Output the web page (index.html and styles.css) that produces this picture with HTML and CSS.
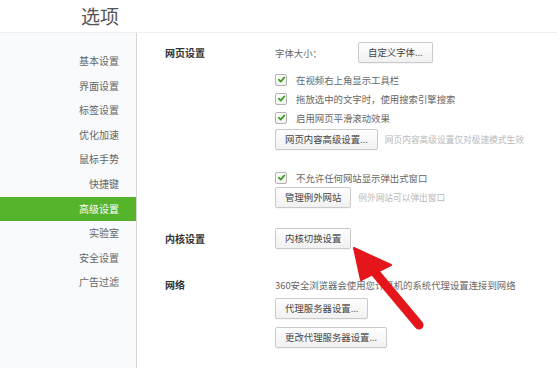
FILE: index.html
```html
<!DOCTYPE html>
<html lang="zh-CN">
<head>
<meta charset="utf-8">
<title>选项</title>
<link rel="stylesheet" href="styles.css">
</head>
<body>
<header class="header"><span class="title">选项</span></header>
<div class="layout">
  <nav class="sidebar">
    <div class="nav-item">基本设置</div>
    <div class="nav-item">界面设置</div>
    <div class="nav-item">标签设置</div>
    <div class="nav-item">优化加速</div>
    <div class="nav-item">鼠标手势</div>
    <div class="nav-item">快捷键</div>
    <div class="nav-item active">高级设置</div>
    <div class="nav-item">实验室</div>
    <div class="nav-item">安全设置</div>
    <div class="nav-item">广告过滤</div>
  </nav>
  <main class="content">
    <section class="section">
      <div class="label">网页设置</div>
      <div class="fields">
        <div class="row">
          <span class="field-name">字体大小：</span>
          <button class="btn">自定义字体...</button>
        </div>
        <div class="checks">
          <label class="check"><span class="box"><svg viewBox="0 0 10 10"><path d="M2 5.2 L4.2 7.4 L8.2 2.6" /></svg></span>在视频右上角显示工具栏</label>
          <label class="check"><span class="box"><svg viewBox="0 0 10 10"><path d="M2 5.2 L4.2 7.4 L8.2 2.6" /></svg></span>拖放选中的文字时，使用搜索引擎搜索</label>
          <label class="check"><span class="box"><svg viewBox="0 0 10 10"><path d="M2 5.2 L4.2 7.4 L8.2 2.6" /></svg></span>启用网页平滑滚动效果</label>
        </div>
        <div class="row gap-sm">
          <button class="btn">网页内容高级设置...</button>
          <span class="hint">网页内容高级设置仅对极速模式生效</span>
        </div>
        <label class="check gap-lg"><span class="box"><svg viewBox="0 0 10 10"><path d="M2 5.2 L4.2 7.4 L8.2 2.6" /></svg></span>不允许任何网站显示弹出式窗口</label>
        <div class="row">
          <button class="btn">管理例外网站</button>
          <span class="hint">例外网站可以弹出窗口</span>
        </div>
      </div>
    </section>
    <section class="section sec-kernel">
      <div class="label">内核设置</div>
      <div class="fields">
        <div class="row"><button class="btn">内核切换设置</button></div>
      </div>
    </section>
    <section class="section sec-net">
      <div class="label">网络</div>
      <div class="fields">
        <div class="row"><span class="text">360安全浏览器会使用您计算机的系统代理设置连接到网络</span></div>
        <div class="row gap-xs"><button class="btn">代理服务器设置...</button></div>
        <div class="row gap-md"><button class="btn">更改代理服务器设置...</button></div>
      </div>
    </section>
  </main>
</div>
<svg class="arrow" width="557" height="368" viewBox="0 0 557 368">
  <line x1="373" y1="270" x2="419" y2="325" stroke="#e4161b" stroke-width="9" stroke-linecap="round"/>
  <polygon points="354,248 391,265 361,280" fill="#e4161b" stroke="#e4161b" stroke-width="2" stroke-linejoin="round"/>
</svg>
</body>
</html>
```

FILE: styles.css
```css
* { box-sizing: border-box; }
html, body { margin: 0; padding: 0; }
body {
  width: 557px;
  height: 368px;
  overflow: hidden;
  background: #fff;
  font-family: "Noto Sans CJK SC", "Noto Sans", sans-serif;
  color: #555;
  position: relative;
}
.header {
  height: 33px;
  border-bottom: 1px solid #efefef;
  display: flex;
  align-items: center;
  padding-left: 81px;
}
.title {
  font-size: 19px;
  color: #555;
  line-height: 1;
  margin-top: -1px;
}
.layout {
  display: flex;
  height: 335px;
}
.sidebar {
  width: 137px;
  flex: none;
  background: #f8fafb;
  border-right: 1px solid #d6d6d6;
  padding-top: 16px;
}
.nav-item {
  height: 24.6px;
  line-height: 24.6px;
  text-align: right;
  padding-right: 17px;
  font-size: 10px;
  color: #666;
}
.nav-item.active {
  background: #55b42c;
  color: #fff;
}
.content {
  flex: 1;
  padding-top: 9px;
  padding-left: 28px;
}
.section {
  display: grid;
  grid-template-columns: 110px 1fr;
  align-items: start;
}
.sec-kernel { margin-top: 20px; }
.sec-net { margin-top: 25px; }
.label {
  font-size: 10px;
  font-weight: bold;
  color: #333;
  line-height: 21px;
}
.fields {
  display: flex;
  flex-direction: column;
  font-size: 9.4px;
}
.row {
  display: flex;
  align-items: center;
  height: 21px;
}
.gap-xs { margin-top: 3px; }
.gap-sm { margin-top: 2px; }
.gap-md { margin-top: 8px; }
.gap-lg { margin-top: 18px; }
.field-name {
  width: 83px;
  color: #666;
}
.text { color: #666; }
.btn {
  height: 21px;
  padding: 0 9px;
  border: 1px solid #cacaca;
  border-radius: 2px;
  background: linear-gradient(#fefefe, #f1f1f1);
  font-family: inherit;
  font-size: 9.4px;
  color: #444;
  line-height: 19px;
  box-shadow: 0 1px 0 rgba(0,0,0,0.04);
}
.hint {
  margin-left: 7px;
  font-size: 8.7px;
  color: #b9b9b9;
}
.checks {
  display: flex;
  flex-direction: column;
  margin-top: 7px;
}
.check {
  display: flex;
  align-items: center;
  height: 19px;
  color: #666;
}
.box {
  width: 12px;
  height: 12px;
  border: 1px solid #b3b3b3;
  border-radius: 2px;
  background: linear-gradient(#fff, #f2f2f2);
  margin-right: 9px;
  display: flex;
  align-items: center;
  justify-content: center;
}
.box svg {
  width: 9px;
  height: 9px;
}
.box path {
  fill: none;
  stroke: #3d9f22;
  stroke-width: 2;
  stroke-linecap: round;
  stroke-linejoin: round;
}
.arrow {
  position: absolute;
  left: 0;
  top: 0;
  pointer-events: none;
}
```
